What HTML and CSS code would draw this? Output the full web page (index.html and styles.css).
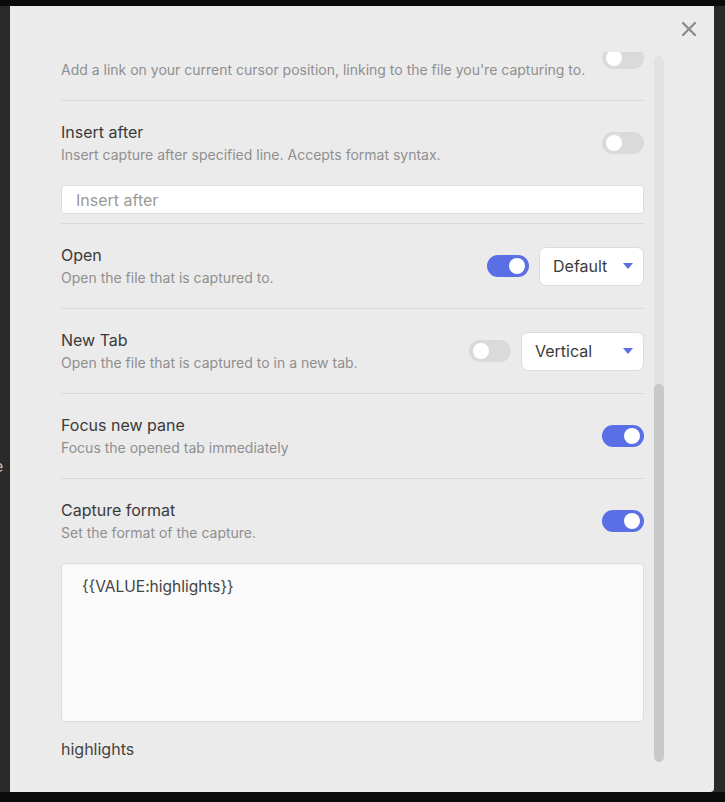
FILE: index.html
```html
<!DOCTYPE html>
<html>
<head>
<meta charset="utf-8">
<link rel="stylesheet" href="styles.css">
</head>
<body>
<div class="bg-text">e</div>
<div class="modal">
  <div class="close">
    <svg width="14" height="14" viewBox="0 0 14 14"><path d="M1 1 L13 13 M13 1 L1 13" stroke="#8a8a8a" stroke-width="2.2" stroke-linecap="round"/></svg>
  </div>
  <div class="body">
    <div class="viewport">
      <div class="content">
        <div class="item">
          <div class="info info-clipped">
            <div class="desc">Add a link on your current cursor position, linking to the file you're capturing to.</div>
          </div>
          <div class="controls"><div class="toggle"></div></div>
        </div>
        <div class="item divided">
          <div class="info">
            <div class="name">Insert after</div>
            <div class="desc">Insert capture after specified line. Accepts format syntax.</div>
          </div>
          <div class="controls"><div class="toggle"></div></div>
        </div>
        <div class="input-wrap"><input class="text-input" type="text" placeholder="Insert after"></div>
        <div class="item divided">
          <div class="info">
            <div class="name">Open</div>
            <div class="desc">Open the file that is captured to.</div>
          </div>
          <div class="controls">
            <div class="toggle on"></div>
            <div class="dropdown dd-default"><span>Default</span><span class="caret"></span></div>
          </div>
        </div>
        <div class="item divided">
          <div class="info">
            <div class="name">New Tab</div>
            <div class="desc">Open the file that is captured to in a new tab.</div>
          </div>
          <div class="controls">
            <div class="toggle"></div>
            <div class="dropdown dd-vertical"><span>Vertical</span><span class="caret"></span></div>
          </div>
        </div>
        <div class="item divided">
          <div class="info">
            <div class="name">Focus new pane</div>
            <div class="desc">Focus the opened tab immediately</div>
          </div>
          <div class="controls"><div class="toggle on"></div></div>
        </div>
        <div class="item divided">
          <div class="info">
            <div class="name">Capture format</div>
            <div class="desc">Set the format of the capture.</div>
          </div>
          <div class="controls"><div class="toggle on"></div></div>
        </div>
        <div class="textarea">{{VALUE:highlights}}</div>
        <div class="footer-text">highlights</div>
      </div>
    </div>
    <div class="scrollbar"><div class="thumb"></div></div>
  </div>
</div>
</body>
</html>
```
FILE: styles.css
```css
html, body {
  margin: 0;
  padding: 0;
  width: 725px;
  height: 802px;
  overflow: hidden;
  background: #2a2a2a;
  font-family: Inter, "Noto Sans", sans-serif;
}
body {
  border-top: 6px solid #0b0b0b;
  box-sizing: border-box;
  position: relative;
}
.bg-text {
  position: absolute;
  left: -6px;
  top: 450px;
  font-size: 16px;
  color: #bbb;
}
.modal {
  position: absolute;
  left: 10px;
  top: 0;
  width: 704px;
  height: 786px;
  background: #ebebeb;
  border-radius: 0 0 4px 0;
  box-sizing: border-box;
}
body::after {
  content: "";
  position: absolute;
  left: 0;
  right: 0;
  bottom: 0;
  height: 10px;
  background: #0b0b0b;
}
.close {
  position: absolute;
  left: 672px;
  top: 16px;
  width: 14px;
  height: 14px;
}
.close svg { display: block; }
.body {
  display: flex;
  padding: 46px 0 0 51px;
  gap: 10px;
}
.viewport {
  width: 583px;
  height: 740px;
  overflow: hidden;
}
.content {
  margin-top: -36px;
}
.item {
  display: flex;
  align-items: center;
  padding: 20px 0;
}
.item.divided {
  border-top: 1px solid #d9d9d9;
}
.info {
  flex: 1;
  display: flex;
  flex-direction: column;
  gap: 2px;
}
.info-clipped {
  padding-top: 24px;
}
.name {
  font-size: 16px;
  line-height: 22px;
  color: #3a3a3a;
}
.desc {
  font-size: 14px;
  line-height: 20px;
  color: #8f8f8f;
}
.controls {
  display: flex;
  align-items: center;
  gap: 10px;
}
.toggle {
  width: 42px;
  height: 22px;
  border-radius: 11px;
  background: #dadada;
  position: relative;
  box-sizing: border-box;
}
.toggle::after {
  content: "";
  position: absolute;
  top: 3px;
  left: 4px;
  width: 16px;
  height: 16px;
  border-radius: 50%;
  background: #fff;
}
.toggle.on {
  background: #5a6fe6;
}
.toggle.on::after {
  left: 22px;
}
.dropdown {
  height: 39px;
  box-sizing: border-box;
  background: #fff;
  border: 1px solid #dcdcdc;
  border-radius: 7px;
  display: flex;
  align-items: center;
  justify-content: space-between;
  padding: 0 10px 0 13px;
  font-size: 16px;
  color: #3a3a3a;
}
.dd-default { width: 105px; }
.dd-vertical { width: 123px; }
.caret {
  width: 0;
  height: 0;
  border-left: 5.5px solid transparent;
  border-right: 5.5px solid transparent;
  border-top: 6px solid #5a6fe6;
  margin-top: -1px;
}
.input-wrap {
  padding-bottom: 9px;
}
.text-input {
  display: block;
  width: 100%;
  height: 29px;
  box-sizing: border-box;
  border: 1px solid #dcdcdc;
  border-radius: 4px;
  background: #fff;
  padding: 0 14px;
  font-family: Inter, "Noto Sans", sans-serif;
  font-size: 16px;
  color: #333;
  outline: none;
}
.text-input::placeholder {
  color: #9a9a9a;
}
.textarea {
  height: 159px;
  box-sizing: border-box;
  background: #fafafa;
  border: 1px solid #dcdcdc;
  border-radius: 4px;
  padding: 12px 20px;
  font-size: 15.5px;
  line-height: 22px;
  color: #444;
}
.footer-text {
  margin-top: 16px;
  font-size: 16px;
  line-height: 22px;
  color: #444;
}
.scrollbar {
  width: 10px;
  height: 706px;
  margin-top: 4px;
  background: #e2e2e2;
  border-radius: 5px;
  display: flex;
  flex-direction: column;
  justify-content: flex-end;
}
.thumb {
  height: 378px;
  background: #c8c8c8;
  border-radius: 5px;
}
```
